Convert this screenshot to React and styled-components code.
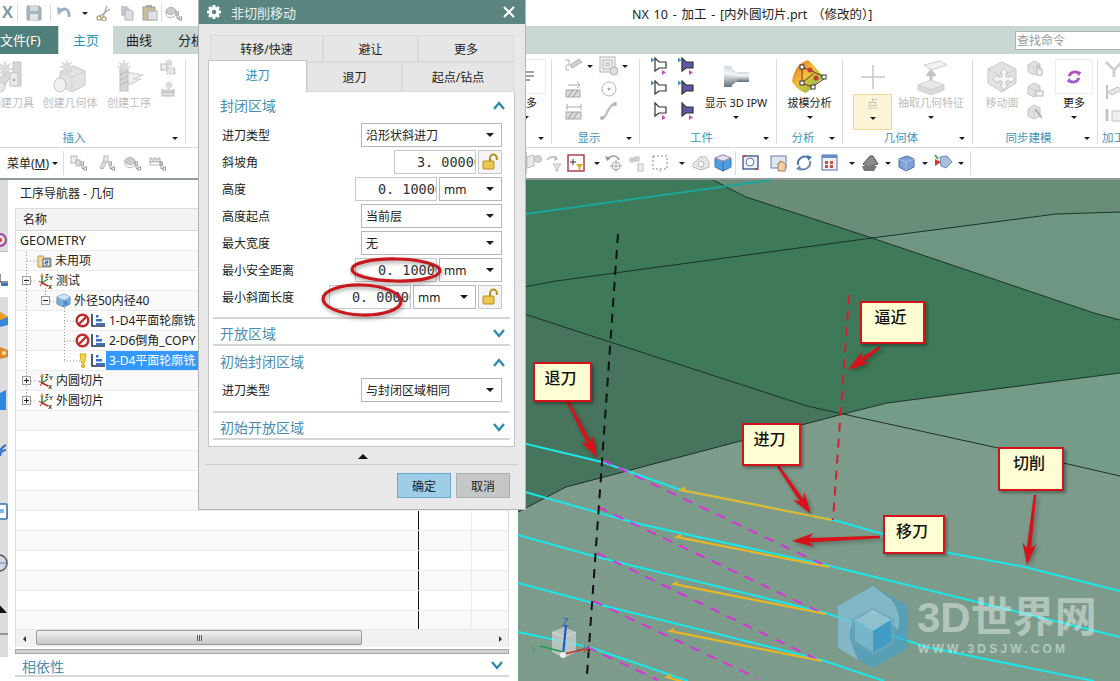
import React from 'react';
import styled, { createGlobalStyle } from 'styled-components';

const CJK = '"Noto Sans", "Noto Sans CJK SC", sans-serif';
const Global = createGlobalStyle`
  html, body { margin: 0; padding: 0; background: #fff; }
  * { box-sizing: border-box; }
  body { font-family: ${CJK}; font-size: 12px; color: #222; }
`;

const Page = styled.div`position: relative; width: 1120px; height: 681px; overflow: hidden; background: #fff; display: flex; flex-direction: column;`;

/* ---------- generic bits ---------- */
const Caret = styled.span`
  display: inline-block; width: 0; height: 0; flex: none;
  border-left: ${p => p.$s || 4}px solid transparent; border-right: ${p => p.$s || 4}px solid transparent;
  border-top: ${p => p.$s || 4}px solid #1c1c1c;
`;
const Svg = ({ s = 18, w, h, vb, children }) => (
  <svg width={w || s} height={h || s} viewBox={vb || `0 0 ${w || s} ${h || s}`} style={{ flex: 'none', display: 'block' }}>{children}</svg>
);

const Burst = ({ x, y, r = 8 }) => {
  const pts = [];
  for (let i = 0; i < 16; i++) {
    const a = (i * Math.PI) / 8;
    const rr = i % 2 ? r * 0.42 : r;
    pts.push(`${(x + Math.cos(a) * rr).toFixed(1)},${(y + Math.sin(a) * rr).toFixed(1)}`);
  }
  return <polygon points={pts.join(' ')} fill="#dcdcdc" stroke="#c8c8c8" strokeWidth=".5" />;
};

const CutterIcon = () => (
  <Svg w={36} h={34}>
    <path d="M2 24 L12 10 L18 14 L8 30 Z" fill="#dadada" stroke="#c4c4c4" />
    <circle cx="6" cy="27" r="5" fill="#e6e6e6" stroke="#c4c4c4" />
    <rect x="19" y="2" width="8" height="24" fill="#d6d6d6" stroke="#c4c4c4" />
    <path d="M16 13 L24 13 L24 26 L16 26 Z" fill="#ebebeb" stroke="#c4c4c4" />
    <circle cx="20" cy="20" r="1.4" fill="#aaa" />
    <Burst x={11} y={9} r={8} />
  </Svg>
);
const GeomIcon = () => (
  <Svg w={36} h={34}>
    <path d="M8 12 L22 6 L33 11 L33 25 L20 32 L8 26 Z" fill="#e2e2e2" stroke="#c8c8c8" />
    <path d="M8 12 L20 17 L33 11 M20 17 L20 32" fill="none" stroke="#d0d0d0" />
    <ellipse cx="8" cy="25" rx="6" ry="7" fill="#f0f0f0" stroke="#c4c4c4" />
    <Burst x={15} y={7} r={7} />
  </Svg>
);
const OperIcon = () => (
  <Svg w={36} h={34}>
    <path d="M16 12 L32 15 L22 19 L30 19 L20 24 L16 24 Z" fill="#f0f0f0" stroke="#ccc" />
    <rect x="9" y="9" width="8" height="22" fill="#d6d6d6" stroke="#c0c0c0" />
    <path d="M9 15 L17 11 M9 20 L17 16 M9 25 L17 21" stroke="#b4b4b4" />
    <Burst x={13} y={7} r={7} />
  </Svg>
);
const BurstSmall = ({ variant }) => (
  <Svg s={18}>
    {variant ? (
      <>
        <path d="M3 12 L3 9 L6 11 L9 9 L12 11 L15 9 L15 12 Z" fill="#eee" stroke="#bbb" />
        <rect x="3" y="12" width="12" height="4" fill="#ddd" stroke="#bbb" />
      </>
    ) : (
      <>
        <rect x="2" y="6" width="6" height="6" fill="#eee" stroke="#bbb" />
        <rect x="8" y="10" width="8" height="6" fill="#e6e6e6" stroke="#bbb" strokeDasharray="2 1" />
      </>
    )}
    <Burst x={10} y={5} r={4} />
  </Svg>
);
const Nodes = ({ kind = 0 }) => (
  <Svg s={18}>
    {kind === 0 && <><rect x="1" y="2" width="6" height="7" fill="#eee" stroke="#b4b4b4" /><rect x="6" y="6" width="4" height="6" fill="#ddd" stroke="#b4b4b4" /></>}
    {kind === 1 && <><path d="M2 14 L6 5 L9 7 L5 15 Z" fill="#ddd" stroke="#b4b4b4" /><rect x="6" y="2" width="4" height="6" fill="#eee" stroke="#b4b4b4" /></>}
    {kind === 2 && <><ellipse cx="6" cy="7" rx="5" ry="3.5" fill="#ccc" stroke="#b4b4b4" /><path d="M1 7 v3 a5 3.5 0 0 0 10 0 v-3" fill="none" stroke="#b4b4b4" /></>}
    {kind === 3 && <><path d="M1 8 v-4 h2 v2 h2 v-2 h2 v2 h2 v-2 h2 v4 Z" fill="#eee" stroke="#b4b4b4" /><rect x="1" y="8" width="11" height="3" fill="#fff" stroke="#b4b4b4" /></>}
    <rect x="11" y="8" width="2.5" height="3" fill="none" stroke="#999" />
    <rect x="14" y="13" width="2.5" height="3" fill="none" stroke="#999" />
    <path d="M12 11 V14.5 H14" fill="none" stroke="#999" />
  </Svg>
);

const ToolRight = ({ fill = '#fff', tip = true, ticks = true }) => (
  <Svg s={22}>
    {ticks && <path d="M3 2.5 L6.5 5 L3 7.5 Z" fill="#4a8ac8" />}
    <path d="M7 3 L11 7 L18 7 L18 13 L11 13 L7 16 Z" fill={fill} stroke="#333" strokeWidth="1.2" />
    {tip && <path d="M14 15 L18 17.5 L14 20 Z" fill="#c44fc0" />}
  </Svg>
);

const IpwIcon = () => (
  <Svg w={26} h={22}>
    <defs>
      <linearGradient id="ipw" x1="0" y1="0" x2="0" y2="1">
        <stop offset="0" stopColor="#cfd6dc" /><stop offset=".35" stopColor="#f4f6f8" /><stop offset="1" stopColor="#5f6d78" />
      </linearGradient>
    </defs>
    <rect x="1" y="0" width="8" height="21" rx="1" fill="url(#ipw)" />
    <path d="M9 3 C12 5 12 6 14 6 L14 16 C12 16 12 17 9 19 Z" fill="url(#ipw)" />
    <rect x="14" y="6" width="12" height="10" fill="url(#ipw)" />
  </Svg>
);
const DraftIcon = () => (
  <Svg w={44} h={36}>
    <defs>
      <linearGradient id="draft" x1="0" y1="0" x2="1" y2="1">
        <stop offset="0" stopColor="#e4602a" /><stop offset=".45" stopColor="#f0c23a" /><stop offset="1" stopColor="#4cc24a" />
      </linearGradient>
    </defs>
    <path d="M4 22 C6 10 12 3 20 1 C26 6 32 14 36 18 C30 22 24 30 18 34 C12 32 7 28 4 22 Z" fill="url(#draft)" />
    <path d="M14 8 L24 12 L36 18 M14 8 L14 24 L24 28 L36 20 M14 24 L26 14" stroke="#7a2a2a" strokeWidth="1" fill="none" />
    {[[14, 8], [14, 24], [36, 18], [25, 28]].map(([x, y]) => <rect key={x + '' + y} x={x - 2} y={y - 2} width="4" height="4" fill="#fff" stroke="#333" />)}
    <circle cx="22" cy="11" r="2.5" fill="#c63a3a" />
    <circle cx="28" cy="19" r="2.5" fill="#c63a3a" />
  </Svg>
);
const PlusIcon = () => (
  <Svg s={26}>
    <path d="M13 1 V25 M1 13 H25" stroke="#c8c8c8" strokeWidth="1.5" />
  </Svg>
);
const ExtractIcon = () => (
  <Svg w={32} h={36}>
    <path d="M9 6 L25 2 L32 6 L16 11 Z" fill="#f2f2f2" stroke="#d0d0d0" />
    <path d="M16 24 V13 M12 17 L16 12 L20 17" stroke="#c4c4c4" strokeWidth="3" fill="none" />
    <path d="M3 26 L16 21 L29 26 L16 31 Z" fill="#e8e8e8" stroke="#d0d0d0" />
    <path d="M3 26 V31 L16 36 L29 31 V26 L16 31 Z" fill="#dadada" stroke="#d0d0d0" />
  </Svg>
);
const MoveFaceIcon = () => (
  <Svg w={36} h={36}>
    <path d="M4 10 L18 3 L32 10 L32 24 L18 33 L4 24 Z" fill="#e2e2e2" stroke="#c8c8c8" />
    <path d="M4 10 L18 18 L32 10 M18 18 V33" stroke="#d0d0d0" fill="none" />
    <path d="M20 9 L24 14 L22 14 L22 18 L26 18 L26 16 L31 20 L26 24 L26 22 L22 22 L22 26 L24 26 L20 31 L16 26 L18 26 L18 22 L14 22 L14 24 L9 20 L14 16 L14 18 L18 18 L18 14 L16 14 Z" fill="#f6f6f6" stroke="#c4c4c4" />
  </Svg>
);
const Hexlet = ({ mark = 0 }) => (
  <Svg s={18}>
    <path d="M2 6 L8 2 L14 5 L14 13 L8 16 L2 13 Z" fill="#e2e2e2" stroke="#c4c4c4" />
    <path d="M2 6 L8 9 L14 5 M8 9 V16" fill="none" stroke="#d0d0d0" />
    {mark === 0 && <path d="M11 7 v9 h5 v-6 h-3 v-3 Z" fill="#f2f2f2" stroke="#b4b4b4" />}
    {mark === 1 && <rect x="10" y="10" width="7" height="5" fill="#f2f2f2" stroke="#b4b4b4" />}
    {mark === 2 && <path d="M9 6 L16 15" stroke="#aaa" strokeWidth="1.5" />}
  </Svg>
);
const Refresh = () => (
  <Svg w={16} h={16} vb="0 0 20 20">
    <path d="M4 9 A7 7 0 0 1 16 6" fill="none" stroke="#b04fc0" strokeWidth="3.6" />
    <path d="M13 2 L19 4 L16 9 Z" fill="#b04fc0" />
    <path d="M16 11 A7 7 0 0 1 4 14" fill="none" stroke="#9d5fd0" strokeWidth="3.6" />
    <path d="M7 18 L1 16 L4 11 Z" fill="#9d5fd0" />
  </Svg>
);
const DisplayIcon = ({ kind }) => (
  <Svg s={20}>
    {kind === 0 && <><path d="M1 4 H5 V9 H2 V14 H5" fill="none" stroke="#b4b4b4" /><path d="M6 9 L15 3 L18 6 L8 12 Z" fill="#d0d0d0" stroke="#b4b4b4" /></>}
    {kind === 1 && <><rect x="1" y="1" width="15" height="15" fill="#f2f2f2" stroke="#b4b4b4" /><rect x="4" y="4" width="9" height="9" fill="none" stroke="#b4b4b4" /><rect x="7" y="7" width="3" height="3" fill="none" stroke="#b4b4b4" /><circle cx="15" cy="15" r="4" fill="#ddd" stroke="#b4b4b4" /></>}
    {kind === 2 && <><path d="M4 6 H16 M13 3 L16 6 L13 9" fill="none" stroke="#aaa" /><rect x="2" y="11" width="14" height="7" fill="#dadada" stroke="#aaa" /><path d="M4 18 L9 11 M9 18 L14 11" stroke="#999" /></>}
    {kind === 3 && <><circle cx="10" cy="10" r="7" fill="none" stroke="#b4b4b4" /><circle cx="10" cy="10" r="1.5" fill="#aaa" /></>}
    {kind === 4 && <><path d="M3 6 H17 M3 3 V9 M17 3 V9" fill="none" stroke="#aaa" /><rect x="2" y="11" width="15" height="7" fill="#dadada" stroke="#aaa" /><path d="M4 18 L9 11 M9 18 L14 11" stroke="#999" /></>}
    {kind === 5 && <><path d="M3 17 C9 17 7 5 16 3" fill="none" stroke="#c0c0c0" strokeWidth="2.4" /><circle cx="3" cy="17" r="2" fill="#b4b4b4" /><circle cx="16" cy="3" r="2" fill="#b4b4b4" /></>}
  </Svg>
);
const CamIcon = ({ k }) => (
  <Svg s={20}>
    {k === 0 && <path d="M2 3 L10 11 L18 3 M10 11 V18" fill="none" stroke="#d0d0d0" strokeWidth="3" />}
    {k === 1 && <><path d="M3 3 V17" stroke="#c4c4c4" strokeWidth="2" /><path d="M3 10 L14 5 L18 8 L8 13 Z" fill="#e4e4e4" stroke="#c4c4c4" /></>}
    {k === 2 && <><path d="M3 4 V16" stroke="#c4c4c4" strokeWidth="3" /><rect x="8" y="6" width="10" height="10" fill="#eee" stroke="#c4c4c4" /></>}
  </Svg>
);

/* right hand toolbar */
const BarIcon = ({ k }) => (
  <Svg s={20}>
    {k === 'filter' && <><path d="M2 4 L9 2 L9 13 L2 15 Z" fill="#e8e8e8" stroke="#bbb" /><circle cx="13" cy="6" r="3.5" fill="#d4d4d4" stroke="#bbb" /></>}
    {k === 'swap' && <><path d="M3 7 C6 3 11 3 13 6 M11 3 L13 6 L10 7" fill="none" stroke="#bbb" strokeWidth="1.6" /><path d="M9 11 H17 L14 15 V18 H12 V15 Z" fill="#e6e6e6" stroke="#bbb" /></>}
    {k === 'select' && <><rect x="1" y="2" width="16" height="16" fill="#fff" stroke="#a5353b" strokeWidth="1.4" /><path d="M6 6 V12 M3 9 H9" stroke="#333" /><path d="M9 11 H16 L13.5 14 V17 H11.5 V14 Z" fill="#e8a820" /></>}
    {k === 'undo' && <><path d="M3 6 C8 1 14 3 15 7" fill="none" stroke="#999" strokeWidth="1.5" /><path d="M1 3 L3 8 L7 5 Z" fill="#999" /><circle cx="12" cy="13" r="4" fill="none" stroke="#aaa" /><path d="M12 7 V19 M6 13 H18" stroke="#aaa" /></>}
    {k === 'multi' && <><circle cx="6" cy="7" r="3" fill="#d0d0d0" /><rect x="9" y="4" width="4" height="4" fill="#ddd" stroke="#bbb" /><rect x="12" y="11" width="5" height="7" fill="#eee" stroke="#bbb" /></>}
    {k === 'dash' && <><rect x="2" y="3" width="14" height="13" fill="none" stroke="#888" strokeDasharray="2 2" /><path d="M9 16 V19" stroke="#aaa" /></>}
    {k === 'wire' && <><path d="M2 11 L9 4 H15 L18 9 V14 L10 17 L2 14 Z" fill="#e8e8e8" stroke="#bbb" /><circle cx="10" cy="11" r="3" fill="#f6f6f6" stroke="#bbb" /></>}
    {k === 'cube' && <><path d="M2 5 L10 2 L18 5 L18 14 L10 18 L2 14 Z" fill="#4c9fe0" stroke="#3a78b8" /><path d="M2 5 L10 8 L18 5 L10 2 Z" fill="#d6ecfa" stroke="#d08090" /><path d="M10 8 V18" stroke="#2f6fa8" /></>}
    {k === 'zoom' && <><rect x="2" y="3" width="15" height="13" fill="#eef2f8" stroke="#35508c" strokeWidth="1.3" /><circle cx="9" cy="9" r="4" fill="#fff" stroke="#5577aa" /><path d="M2 3 h3 M17 16 h-3" stroke="#c43" strokeWidth="2" /></>}
    {k === 'pan' && <><rect x="2" y="3" width="15" height="12" fill="#dfe6f2" stroke="#6b7fa4" /><path d="M9 18 L9 10 L11 10 L11 8 L14 9 L17 12 L16 18 Z" fill="#f0cfa8" stroke="#a87f50" /></>}
    {k === 'rotate' && <><path d="M4 12 A7 7 0 0 1 15 5" fill="none" stroke="#4a76a8" strokeWidth="2" /><path d="M13 2 L18 4 L14 8 Z" fill="#4a76a8" /><path d="M16 8 A7 7 0 0 1 5 15" fill="none" stroke="#6a8ab0" strokeWidth="2" /><path d="M7 18 L2 16 L6 12 Z" fill="#6a8ab0" /></>}
    {k === 'grid' && <><rect x="2" y="2" width="15" height="15" fill="#eef2f8" stroke="#5070a8" /><rect x="2" y="2" width="15" height="3" fill="#6a8cc4" /><path d="M5 8 h3 v3 h-3 Z M10 8 h3 v3 h-3 Z M5 12 h3 v3 h-3 Z M10 12 h3 v3 h-3 Z" fill="#c85040" /></>}
    {k === 'shade' && <><path d="M3 11 L10 3 L13 3 L18 11 L8 14 Z" fill="#8a8a8a" stroke="#555" /><path d="M2 13 L17 13 L14 18 L4 18 Z" fill="#777" /></>}
    {k === 'box' && <><path d="M3 6 L11 3 L18 6 L18 14 L10 18 L3 14 Z" fill="#7fa3d8" stroke="#4a6aa0" /><path d="M3 6 L10 9 L18 6 M10 9 V18" fill="none" stroke="#a8c2e8" /></>}
    {k === 'cs' && <><path d="M7 4 L14 3 L19 9 L13 15 L8 13 Z" fill="#a8c0e0" stroke="#6a88b0" /><path d="M2 6 L8 9 L2 13 Z" fill="#c83a3a" /><path d="M2 2 L5 6" stroke="#3ab040" strokeWidth="2" /></>}
  </Svg>
);

/* ---------- title bar ---------- */
const TitleBar = styled.div`height: 26px; flex: none; display: flex; align-items: center; background: #fff; position: relative;`;
const QuickBar = styled.div`display: flex; align-items: center; width: 632px; height: 100%; gap: 0;`;
const QuickSlot = styled.span`display: flex; justify-content: center; align-items: center; width: ${p => p.$w}px; flex: none;`;
const QuickSep = styled.span`width: 1px; height: 18px; background: #dcdcdc; flex: none;`;
const WindowTitle = styled.div`font-size: 12.5px; color: #222; white-space: nowrap; word-spacing: 1.5px;`;
const NxMark = styled.span`font: bold 17px "Liberation Sans", sans-serif; color: #7d99a6; margin-left: -2px;`;
const SaveIcon = () => (
  <Svg s={16}><path d="M1 1 H13 L15 3 V15 H1 Z" fill="#a9b3c0" stroke="#9aa" /><rect x="4" y="1" width="8" height="5" fill="#d4d9e0" /><rect x="4" y="9" width="8" height="6" fill="#e0e3e8" /></Svg>
);
const UndoIcon = () => (
  <Svg s={16}><path d="M4 6 C8 2 14 4 13 12" fill="none" stroke="#9ab0c4" strokeWidth="3" /><path d="M1 2 L8 5 L2 10 Z" fill="#9ab0c4" /></Svg>
);
const CutIcon = () => (
  <Svg s={16}><circle cx="3" cy="13" r="2" fill="none" stroke="#b8a37a" strokeWidth="1.4" /><circle cx="8" cy="14" r="2" fill="none" stroke="#b8a37a" strokeWidth="1.4" /><path d="M4 11 L14 4 M7 12 L11 1" stroke="#aaa" strokeWidth="1.4" /></Svg>
);
const CopyIcon = () => (
  <Svg s={16}><path d="M2 1 H8 L10 3 V11 H2 Z" fill="#c5cbd2" /><path d="M6 5 H12 L14 7 V15 H6 Z" fill="#dce0e5" stroke="#b0b5bb" /></Svg>
);
const PasteIcon = () => (
  <Svg s={16}><rect x="1" y="2" width="12" height="13" fill="#c9bc9a" stroke="#aaa18a" /><rect x="4" y="0" width="6" height="3" fill="#aaa" /><rect x="6" y="6" width="9" height="9" fill="#dfe3e8" stroke="#aaa" /></Svg>
);

/* ---------- tabs ---------- */
const TabBar = styled.div`height: 28px; flex: none; background: #c8d7d4; display: flex; align-items: stretch; position: relative;`;
const FileTab = styled.div`width: 58px; background: #4e7f7a; color: #fff; font-size: 13px; line-height: 28px; white-space: nowrap;`;
const RibbonTab = styled.div`
  width: ${p => p.$w}px; flex: none; text-align: center; font-size: 13px; line-height: 28px;
  color: ${p => (p.$on ? '#2f8fb5' : '#222')}; background: ${p => (p.$on ? '#fff' : 'transparent')};
  margin-left: ${p => p.$ml || 0}px;
`;
const SearchBox = styled.div`
  margin-left: auto; width: 105px; height: 19px; align-self: center; border: 1px solid #aab5b3; border-right: 0;
  background: #fff; color: #9a9a9a; font-size: 12px; line-height: 17px; padding-left: 1px;
`;

/* ---------- ribbon ---------- */
const Ribbon = styled.div`height: 94px; flex: none; display: flex; padding-top: 5px; background: #fff; border-bottom: 1px solid #d8d8d8; overflow: hidden;`;
const Group = styled.div`
  width: ${p => p.$w}px; flex: none; height: 85px; display: flex; flex-direction: column; margin-left: ${p => p.$ml || 0}px;
  border-right: ${p => (p.$last ? 'none' : '1px solid #dcdcdc')};
`;
const GroupBody = styled.div`height: 73px; display: flex; justify-content: ${p => p.$end ? 'flex-end' : 'flex-start'}; padding-left: ${p => p.$pad || 0}px; padding-right: ${p => p.$padR || 0}px;`;
const GroupFoot = styled.div`height: 12px; display: flex; align-items: center; font-size: 11.5px; line-height: 12px; color: #3f93b8;`;
const GroupName = styled.span`flex: 1; text-align: ${p => p.$left ? 'left' : 'center'}; padding-left: ${p => p.$left ? 4 : 0}px; white-space: nowrap;`;
const FootCaret = styled(Caret)`margin: 0 7px 0 0;`;
const Large = styled.div`width: ${p => p.$w}px; flex: none; display: flex; flex-direction: column; align-items: center; margin-left: ${p => p.$ml || 0}px;`;
const LargeIcon = styled.div`
  height: 35px; width: 100%; display: flex; align-items: center; justify-content: center;
  ${p => p.$boxed ? 'border: 1px solid #ececec;' : ''}
`;
const LabelBlock = styled.div`
  width: 100%; flex: 1; display: flex; flex-direction: column; align-items: center; max-height: 36px;
  ${p => p.$active ? 'background: #fdf4d8; border: 1px solid #efd997;' : ''}
`;
const LargeLabel = styled.span`
  font-size: 11px; line-height: 17px; white-space: nowrap; color: ${p => (p.$dim ? '#bdbdbd' : '#222')};
`;
const CaretRow = styled.div`height: 12px; display: flex; align-items: center; justify-content: center;`;
const SmallCol = styled.div`width: ${p => p.$w}px; flex: none; display: flex; flex-direction: column; margin-left: ${p => p.$ml || 0}px; align-items: center; margin-top: ${p => p.$top || 0}px; gap: ${p => p.$gap || 4}px;`;
const SmallGrid = styled.div`
  display: grid; grid-template-columns: ${p => p.$cols}; grid-auto-rows: 22.5px; align-items: center; justify-items: center;
  margin-left: ${p => p.$ml || 0}px; margin-top: -4px; flex: none;
`;

const Big = ({ icon, label, w, ml, caret = true, dim, active, boxed }) => (
  <Large $w={w} $ml={ml}>
    <LargeIcon $boxed={boxed}>{icon}</LargeIcon>
    <LabelBlock $active={active}>
      <LargeLabel $dim={dim}>{label}</LargeLabel>
      {caret && <CaretRow><Caret $s={3.5} /></CaretRow>}
    </LabelBlock>
  </Large>
);
const Foot = ({ name, caret = true, left }) => (
  <GroupFoot><GroupName $left={left}>{name}</GroupName>{caret && <FootCaret $s={3.5} />}</GroupFoot>
);

/* ---------- toolbar ---------- */
const ToolBar = styled.div`height: 32px; flex: none; display: flex; align-items: center; background: #fff; border-bottom: 2px solid #8f9a98; overflow: hidden;`;
const MenuButton = styled.div`display: flex; align-items: center; gap: 3px; font-size: 12px; padding-left: 7px; width: 63px; flex: none; white-space: nowrap;`;
const ToolSlot = styled.span`display: flex; justify-content: center; align-items: center; width: ${p => p.$w}px; flex: none;`;
const ToolSep = styled.span`width: 1px; height: 24px; background: #dcdcdc; flex: none;`;
const ComboStub = styled.span`width: 15px; height: 22px; flex: none; border: 1px solid #c8c8c8; border-left: 0; display: flex; align-items: center; justify-content: flex-end; padding-right: 2px;`;

/* ---------- workspace ---------- */
const Workspace = styled.div`flex: 1; display: flex; min-height: 0;`;
const Rail = styled.div`width: 8px; flex: none; display: flex; flex-direction: column;`;
const RailPart = styled.div`
  height: ${p => p.$h}px; flex: none; overflow: hidden; position: relative;
  background: ${p => (p.$grey ? '#dcdcdc' : '#fff')};
  border-bottom: ${p => (p.$line ? '1px solid #bdbdbd' : 'none')};
`;
const RailGlyph = styled.div`position: absolute; right: 0; top: ${p => p.$t}px;`;
const Nav = styled.div`width: 510px; flex: none; padding-left: 7px; padding-right: 9px; display: flex; flex-direction: column;`;
const NavTitle = styled.div`height: 28px; flex: none; line-height: 28px; padding-left: 5px; font-size: 12px; color: #222;`;
const Table = styled.div`flex: none; border-left: 1px solid #dcdcdc; border-right: 1px solid #dcdcdc; position: relative; display: flex; flex-direction: column;`;
const TableHead = styled.div`height: 23px; background: #f3f3f3; border-top: 1px solid #dcdcdc; border-bottom: 1px solid #d4d4d4; line-height: 21px; padding-left: 7px; font-size: 12px;`;
const RowsArea = styled.div`height: 398px; overflow: hidden; position: relative;`;
const Row = styled.div`
  height: 20px; display: grid; grid-template-columns: 403px 53px 1fr;
  background: ${p => (p.$odd ? '#f9f9f9' : '#fff')}; border-bottom: 1px solid #ebebeb;
`;
const MainCell = styled.div`
  display: flex; align-items: center; padding-left: ${p => p.$pad || 0}px; overflow: hidden; border-right: 1px solid #111;
  font-size: ${p => p.$big ? '12.5px' : '12px'}; white-space: nowrap;
`;
const Cell = styled.div`border-right: 1px solid #ebebeb;`;
const Expander = styled.span`
  width: 9px; height: 9px; flex: none; margin-right: 6px; border: 1px solid #9a9a9a; background: #f6f6f6;
  position: relative;
  &::before { content: ''; position: absolute; left: 1px; top: 3px; width: 5px; height: 1px; background: #222; }
  ${p => p.$closed ? `&::after { content: ''; position: absolute; left: 3px; top: 1px; width: 1px; height: 5px; background: #222; }` : ''}
`;
const NodeLabel = styled.span`
  padding: 0 3px; line-height: 19px; height: 19px; flex: 1;
  color: ${p => (p.$sel ? '#fff' : '#222')}; background: ${p => (p.$sel ? '#3399ff' : 'transparent')};
`;
const TreeLines = styled.svg`position: absolute; left: 0; top: 0; pointer-events: none;`;
const Scrollbar = styled.div`height: 18px; flex: none; background: #f1f1f1; border-top: 1px solid #e6e6e6; display: flex; align-items: center; position: relative; padding: 0 6px;`;
const Thumb = styled.div`
  position: absolute; left: 20px; width: 326px; height: 15px; top: 0; border: 1px solid #9a9a9a; border-radius: 2px;
  background: linear-gradient(#f2f2f2, #dcdcdc 50%, #c6c6c6); display: flex; align-items: center; justify-content: center; gap: 1px;
  span { width: 1px; height: 6px; background: #555; }
`;
const ArrowL = styled.span`width: 0; height: 0; border: 3.5px solid transparent; border-right-color: #333; margin-left: -2px;`;
const ArrowR = styled.span`width: 0; height: 0; border: 3.5px solid transparent; border-left-color: #333; margin-left: auto; margin-right: -3px;`;
const Band = styled.div`height: 5px; flex: none; margin-top: 2px; background: #cfcfcf; border: 1px solid #a8a8a8;`;
const DepHeader = styled.div`
  height: 23px; flex: none; display: flex; align-items: center; justify-content: space-between; padding: 2px 6px 0 7px;
  font-size: 14px; color: #4a8db0; border-bottom: 2px solid #d8d8d8;
`;

const Chevron = ({ up }) => (
  <Svg w={12} h={9}><path d={up ? 'M1 8 L6 2 L11 8' : 'M1 1 L6 7 L11 1'} fill="none" stroke="#2f8cac" strokeWidth="2.4" /></Svg>
);

const Folder = () => (
  <Svg s={15}><path d="M1 3 H6 L7 5 H14 V14 H1 Z" fill="#f2dc9a" stroke="#b59a50" /><rect x="6" y="6" width="7" height="7" fill="#fff" stroke="#3a5a9a" /><path d="M8 8 h3 v1.5 h-3 v1.5 h3" fill="none" stroke="#3a5a9a" /></Svg>
);
const Triad = () => (
  <Svg w={16} h={16}>
    <path d="M5 10 V3" stroke="#2f7f3a" strokeWidth="1.5" /><path d="M3 4 L5 0 L7 4 Z" fill="#e08a2a" />
    <path d="M5 10 L11 6" stroke="#3a8a3a" strokeWidth="1.5" />
    <path d="M5 10 L11 13" stroke="#c02020" strokeWidth="1.5" />
    <path d="M2 8 L5 10 L3 13" stroke="#c02020" fill="none" />
    <text x="8" y="5" fontSize="6" fontFamily="Liberation Sans" fontWeight="bold" fill="#222">Z</text>
    <text x="12" y="7" fontSize="6" fontFamily="Liberation Sans" fontWeight="bold" fill="#222">Y</text>
    <text x="11" y="16" fontSize="6" fontFamily="Liberation Sans" fontWeight="bold" fill="#222">X</text>
  </Svg>
);
const BlueCube = () => (
  <Svg s={15}><path d="M1 4 L8 1 L14 4 L14 11 L8 14 L1 11 Z" fill="#7fb0dc" stroke="#5f8fbc" /><path d="M1 4 L8 7 L14 4 L8 1 Z" fill="#cfe3f4" /><path d="M8 7 V14" stroke="#4f7fa8" /><circle cx="10" cy="10" r="2" fill="#4f88c0" /></Svg>
);
const Ban = () => (
  <Svg s={15}><circle cx="7.5" cy="7.5" r="5.8" fill="#fff" stroke="#c22a2a" strokeWidth="2.4" /><path d="M3.5 11.5 L11.5 3.5" stroke="#c22a2a" strokeWidth="2.4" /></Svg>
);
const OpGlyph = () => (
  <Svg w={16} h={15}><path d="M2 1 V13 H15" fill="none" stroke="#22335a" strokeWidth="1.6" /><rect x="6" y="2" width="2.5" height="2.5" fill="#3b6fc4" /><rect x="6" y="6" width="6" height="2.5" fill="#3b6fc4" /><rect x="6" y="10" width="9" height="2" fill="#3b6fc4" /></Svg>
);
const Bulb = () => (
  <Svg s={15}><path d="M5 1 H11 L9.5 10 H6.5 Z" fill="#f6d840" stroke="#c8a818" /><circle cx="8" cy="13" r="1.6" fill="#e8c428" stroke="#c8a818" /></Svg>
);

/* ---------- scene ---------- */
const Scene = styled.div`flex: 1; position: relative; overflow: hidden; background: #7d9b8b;`;
const SceneSvg = styled.svg`position: absolute; left: 0; top: 0; display: block;`;
const Callout = styled.div`
  position: absolute; left: ${p => p.$x - 518}px; top: ${p => p.$y - 180}px; width: ${p => p.$w}px; height: ${p => p.$h}px;
  background: #fffed2; border: 2px solid #d2141a; box-shadow: 2px 2px 3px rgba(0,0,0,.35);
  font-size: 16px; font-weight: 500; color: #111; display: flex; justify-content: center; padding-top: 3px; line-height: 22px; padding-right: 4px;
`;
const WaterMain = styled.div`
  position: absolute; left: ${917 - 518}px; top: ${594 - 180}px; font: bold 42px/48px "Liberation Sans", "Noto Sans CJK SC", sans-serif;
  color: rgba(232, 240, 236, .5); white-space: nowrap;
`;
const WaterSub = styled.div`
  position: absolute; left: ${918 - 518}px; top: ${642 - 180}px; font: bold 12px/15px "Liberation Sans", sans-serif; letter-spacing: 3.2px;
  color: rgba(232, 240, 236, .55); white-space: nowrap;
`;

function arrow([x1, y1], [x2, y2]) {
  const dx = x2 - x1, dy = y2 - y1, L = Math.hypot(dx, dy), ux = dx / L, uy = dy / L, nx = -uy, ny = ux;
  const p = (along, off) => `${(x1 + ux * along + nx * off).toFixed(1)},${(y1 + uy * along + ny * off).toFixed(1)}`;
  const H = 22;
  return [p(0, -1.2), p(L - H + 5, -2.2), p(L - H, -7), p(L, 0), p(L - H, 7), p(L - H + 5, 2.2), p(0, 1.2)].join(' ');
}
const ARROWS = [
  [[567, 400], [597, 458]],
  [[778, 466], [811, 514]],
  [[880, 347], [848, 370]],
  [[880, 537], [792, 541]],
  [[1035, 495], [1027, 565]],
];
const CYAN = [
  'M518 442 L602 462 L681 490 L834 520 L949 553 L1025 567 L1120 591',
  'M518 490 L635 523 L826 565 L1120 637',
  'M518 535 L597 557 L826 613 L926 647 L1094 681',
  'M518 583 L593 603 L822 660 L884 681',
  'M518 632 L589 647 L688 681',
];
const MAGENTA = [
  [602, 460, 830, 568], [598, 507, 826, 615], [597, 553, 822, 662], [593, 601, 757, 678], [587, 647, 658, 680],
];
const ORANGE = [
  [681, 490, 832, 520], [677, 537, 829, 567], [674, 584, 826, 614], [670, 631, 822, 661], [667, 677, 690, 684],
];

const SceneArt = () => (
  <SceneSvg width="602" height="501" viewBox="518 180 602 501">
    <polygon points="518,180 713,180 746,197 872,238 1094,313 1120,320 1120,373 887,403 843,414 566,487 518,512" fill="#3e7a5a" />
    <polygon points="518,311 807,406 843,414 566,487 518,512" fill="#47745c" />
    <polygon points="713,180 1120,180 1120,212 1056,214 872,238 746,197" fill="#6a8d7a" />
    <polygon points="872,238 1056,214 1120,212 1120,320 1094,313" fill="#6f9682" />
    <polygon points="843,414 887,403 1120,373 1120,476 998,448" fill="#749c88" />
    <g fill="none" stroke="#1d3328" strokeWidth="1">
      <path d="M713 180 L746 197 L872 238 L1094 313 L1120 320" />
      <path d="M518 288 L556 281 L872 238 L1056 214 L1120 212" />
      <path d="M518 312 L807 406 L843 414 L998 448 L1120 476" />
      <path d="M518 512 L566 487 L843 414 L887 403 L1120 373" />
    </g>
    <path d="M518 215 L772 180" stroke="#1aa79b" strokeWidth="2" fill="none" />
    <g fill="none" stroke="#1be7e8" strokeWidth="2">{CYAN.map(d => <path key={d} d={d} />)}</g>
    <g stroke="#d832d8" strokeWidth="2" strokeDasharray="10 8">{MAGENTA.map(m => <line key={m[0]} x1={m[0]} y1={m[1]} x2={m[2]} y2={m[3]} />)}</g>
    <g stroke="#e8b526" strokeWidth="2.2" fill="none">{ORANGE.map(o => <path key={o[0]} d={`M${o[0] + 4} ${o[1] - 2} L${o[0]} ${o[1]} L${o[2]} ${o[3]}`} />)}</g>
    <line x1="618" y1="234" x2="587" y2="675" stroke="#111" strokeWidth="2" strokeDasharray="9 7" />
    <line x1="849" y1="295" x2="833" y2="520" stroke="#d42030" strokeWidth="2" strokeDasharray="9 7" />
    <g style={{ filter: 'drop-shadow(2px 2px 2px rgba(0,0,0,.3))' }} fill="#d8121a">
      {ARROWS.map((a, i) => <polygon key={i} points={arrow(a[0], a[1])} />)}
    </g>
    {/* axis triad */}
    <path d="M552 632 L564 627 L576 632 L576 652 L564 658 L552 652 Z" fill="#c8d2cc" opacity=".75" />
    <path d="M552 632 L564 637 L576 632 M564 637 V658" stroke="#dfe6e2" fill="none" opacity=".8" />
    <path d="M563 655 L566 625" stroke="#1f55d8" strokeWidth="2.2" />
    <path d="M563 652 L540 646" stroke="#1f9a4a" strokeWidth="1.5" />
    <path d="M564 654 L585 649" stroke="#c83030" strokeWidth="1.5" />
    <circle cx="563" cy="655" r="3" fill="#f0f0f0" />
    <text x="562" y="626" fontSize="11" fill="#2f60d0" fontFamily="Liberation Sans">Z</text>
    <text x="530" y="653" fontSize="11" fill="#4aa070" fontFamily="Liberation Sans">Y</text>
    <text x="583" y="653" fontSize="11" fill="#b03838" fontFamily="Liberation Sans">X</text>
    {/* watermark logo */}
    <g>
      <polygon points="873,586 908,606 908,648 873,668 838,648 838,606" fill="#3fa2cf" opacity=".62" />
      <path d="M838 606 L873 586 L892 600 C900 612 900 622 898 630 L884 616 C870 610 855 614 850 630 C848 642 856 652 858 660 L838 648 Z" fill="#a6cbd4" opacity=".55" />
      <polygon points="873,609 893,620 893,643 873,654 853,643 853,620" fill="none" stroke="#6fa8b8" strokeWidth="3" opacity=".6" />
      <polygon points="873,610 891,620 873,631 855,620" fill="#9cc8d4" opacity=".8" />
      <polygon points="855,620 873,631 873,652 855,641" fill="#7fbcd0" opacity=".8" />
      <polygon points="891,620 873,631 873,652 891,641" fill="#3c9ac6" opacity=".8" />
    </g>
  </SceneSvg>
);

/* ---------- dialog ---------- */
const Dialog = styled.div`
  position: absolute; left: 198px; top: 0; width: 328px; height: 510px; background: #e8e8e8;
  border: 1px solid #b4b4b4; border-top: 0; display: flex; flex-direction: column; padding: 0 10px 0 9px;
`;
const DialogHead = styled.div`
  height: 24px; flex: none; margin: 0 -10px 0 -9px; background: #5b8580; display: flex; align-items: center; padding: 0 9px 0 8px; gap: 10px;
  color: #e8f0ee; font-size: 13px;
`;
const CloseX = styled.span`margin-left: auto; display: flex;`;
const TabsTop = styled.div`display: grid; grid-template-columns: 113px 95px 96px; margin: 11px 1px 0 2px; height: 27px; flex: none;`;
const TabsBottom = styled.div`display: grid; grid-template-columns: 99px 95px 112px; height: 29px; flex: none; position: relative; z-index: 1;`;
const DTab = styled.div`
  display: flex; align-items: center; justify-content: center; font-size: 12px;
  background: ${p => (p.$on ? '#fff' : '#e6e6e6')}; color: ${p => (p.$on ? '#2f8fb5' : '#222')};
  border: 1px solid ${p => (p.$on ? '#c4c4c4' : '#dadada')}; border-bottom: ${p => (p.$on ? '0' : '1px solid #dadada')};
  ${p => p.$on ? 'margin-top: -2px; height: 32px; align-self: start; padding-bottom: 4px;' : ''}
`;
const Panel = styled.div`height: 356px; flex: none; background: #fff; border: 1px solid #c4c4c4; padding: 0 4px; display: flex; flex-direction: column;`;
const Section = styled.div`border-bottom: 2px solid #d6d6d6; padding-bottom: ${p => p.$pb || 0}px; flex: none;`;
const SectionHead = styled.div`
  height: ${p => p.$h}px; display: flex; justify-content: space-between; align-items: ${p => p.$top ? 'flex-start' : 'center'};
  padding: ${p => p.$pt || 0}px 5px 0 7px; font-size: 14px; line-height: 20px; color: #4a8db0;
  svg { margin-top: ${p => p.$top ? '5px' : '0'}; }
`;
const FormRows = styled.div`display: flex; flex-direction: column; gap: 3px; padding: 0 8px 0 9px;`;
const FormRow = styled.div`height: 24px; display: flex; align-items: center; justify-content: flex-end; gap: 2px;`;
const FormLabel = styled.span`margin-right: auto; font-size: 12px; color: #222; white-space: nowrap;`;
const Select = styled.div`
  width: ${p => p.$w}px; height: 100%; flex: none; border: 1px solid #b6b6b6; background: #fff; font-size: 12px;
  display: flex; align-items: center; justify-content: space-between; padding: 0 7px 0 4px; white-space: nowrap;
`;
const NumBox = styled.div`
  width: 82px; height: 100%; flex: none; border: 1px solid #c8c8c8; background: #fff; overflow: hidden;
  display: flex; align-items: center; justify-content: flex-end;
`;
const NumText = styled.span`font: 13.5px "DejaVu Sans Mono", monospace; color: #333; white-space: pre; margin-right: -7px;`;
const LockBtn = styled.div`width: 24px; height: 100%; flex: none; border: 1px solid #c8c8c8; background: #f4f4f4; display: flex; align-items: center; justify-content: center;`;
const Collapse = styled.div`height: 18px; flex: none; border-bottom: 1px solid #d0d0d0; margin: 0 -3px; display: flex; align-items: flex-end; justify-content: center; padding: 0 0 3px 0;`;
const UpTri = styled.span`width: 0; height: 0; border: 5px solid transparent; border-bottom-color: #111; border-top: 0; margin-left: 2px; margin-bottom: 2px;`;
const Buttons = styled.div`display: flex; justify-content: flex-end; gap: 5px; padding: 8px 5px 0 0;`;
const DlgButton = styled.div`
  width: 54px; height: 25px; font-size: 12px; display: flex; align-items: center; justify-content: center; color: #222;
  background: ${p => (p.$primary ? '#9ecde8' : '#c4c6c8')}; border: 1px solid ${p => (p.$primary ? '#65a9d0' : '#adb0b2')};
`;
const Ellipses = styled.svg`position: absolute; left: 0; top: 0; pointer-events: none;`;

const Lock = () => (
  <Svg s={18}>
    <path d="M9 8 V5 A3.4 3.4 0 0 1 15.8 5 V7" fill="none" stroke="#b48f20" strokeWidth="2" />
    <rect x="2" y="8" width="11" height="8" rx="1" fill="#edc84e" stroke="#b48f20" />
  </Svg>
);
const Gear = () => (
  <Svg s={14}>
    <g fill="#fff">
      <circle cx="7" cy="7" r="5.4" />
      {[0, 45, 90, 135].map(a => <rect key={a} x="5.6" y="0" width="2.8" height="14" transform={`rotate(${a} 7 7)`} />)}
    </g>
    <circle cx="7" cy="7" r="2.3" fill="#5b8580" />
  </Svg>
);

const SelectBox = ({ w = 141, children }) => (
  <Select $w={w}><span>{children}</span><Caret /></Select>
);

const TREE = [
  { text: 'GEOMETRY', pad: 1, big: true },
  { text: '未用项', pad: 21, icons: [<Folder key="f" />] },
  { text: '测试', pad: 6, exp: 'open', icons: [<Triad key="t" />], },
  { text: '外径50内径40', pad: 25, exp: 'open', icons: [<BlueCube key="c" />] },
  { text: '1-D4平面轮廓铣', pad: 59, icons: [<Ban key="b" />, <OpGlyph key="o" />] },
  { text: '2-D6倒角_COPY', pad: 59, icons: [<Ban key="b" />, <OpGlyph key="o" />] },
  { text: '3-D4平面轮廓铣', pad: 59, sel: true, icons: [<Bulb key="b" />, <OpGlyph key="o" />] },
  { text: '内圆切片', pad: 6, exp: 'closed', icons: [<Triad key="t" />] },
  { text: '外圆切片', pad: 6, exp: 'closed', icons: [<Triad key="t" />] },
];
const ROWS = Array.from({ length: 20 }, (_, i) => TREE[i] || null);

const RAIL = [
  { h: 52, grey: true },
  { h: 20, grey: true, line: true, glyph: <Svg w={16} h={16}><circle cx="8" cy="8" r="6" fill="none" stroke="#a040a0" strokeWidth="2" /><circle cx="8" cy="8" r="2" fill="#d04040" /></Svg>, t: 0 },
  { h: 45, glyph: <Svg w={16} h={16}><path d="M8 2 V10 H16" fill="none" stroke="#222" /><path d="M9 11 h7 v3 h-7 Z" fill="#3a78c0" /></Svg>, t: 20 },
  { h: 30, grey: true, glyph: <Svg w={16} h={16}><path d="M0 6 L8 1 L16 6 L16 14 L8 16 L0 14 Z" fill="#3a86d8" /><path d="M0 6 L8 1 L16 6 L8 9 Z" fill="#f0a020" /></Svg>, t: 14 },
  { h: 35, grey: true, glyph: <Svg w={16} h={32} vb="0 0 16 32"><path d="M8 3 L16 6 L16 13 L8 15 Z" fill="#e08830" /><circle cx="12" cy="9" r="2" fill="#f8e0a0" /><path d="M10 20 h6 v6 h-6 Z" fill="none" stroke="#777" /></Svg>, t: 17 },
  { h: 65, grey: true, glyph: <Svg w={16} h={24} vb="0 0 16 24"><path d="M14 2 V22 H2 V8 Z" fill="#2f86dc" /></Svg>, t: 26 },
  { h: 50, grey: true, glyph: <Svg w={16} h={16}><path d="M8 14 A6 6 0 0 1 14 8 M8 9 A11 11 0 0 1 14 3" fill="none" stroke="#2f6fd0" strokeWidth="2" /></Svg>, t: 15 },
  { h: 55, grey: true, glyph: <Svg w={16} h={18} vb="0 0 16 18"><rect x="3" y="2" width="12" height="15" rx="1" fill="#fff" stroke="#3570b8" strokeWidth="1.6" /><rect x="8" y="7" width="4" height="4" fill="#7fb8e8" /></Svg>, t: 25 },
  { h: 55, grey: true, glyph: <Svg w={18} h={18} vb="0 0 18 18"><circle cx="9" cy="9" r="8" fill="#cfd8e6" stroke="#555" strokeWidth="1.4" /><path d="M1 9 H17 M9 1 V17" stroke="#6a7fa8" /></Svg>, t: 22 },
  { h: 70, grey: true, glyph: <Svg w={16} h={36} vb="0 0 16 36"><path d="M7 0 L15 9 L7 9 Z" fill="#111" /><path d="M8 30 H16" stroke="#555" /></Svg>, t: 17 },
];

const TOOL_R = [
  ['stub'], ['filter', 15], ['swap', 23], ['select', 23], ['c', 17], ['undo', 18], ['multi', 25], ['dash', 25], ['c', 18],
  ['wire', 20], ['cube', 24], ['sep'], ['zoom', 30], ['pan', 26], ['rotate', 24], ['grid', 27], ['c', 17], ['shade', 19],
  ['c', 17], ['box', 20], ['c', 18], ['cs', 18], ['c', 18], ['sep'],
];

export default function App() {
  return (
    <Page>
      <Global />
      <TitleBar>
        <QuickBar>
          <QuickSlot $w={17}><NxMark>X</NxMark></QuickSlot>
          <QuickSep />
          <QuickSlot $w={32}><SaveIcon /></QuickSlot>
          <QuickSep />
          <QuickSlot $w={25}><UndoIcon /></QuickSlot>
          <QuickSlot $w={17}><Caret $s={3.5} /></QuickSlot>
          <QuickSlot $w={22}><CutIcon /></QuickSlot>
          <QuickSlot $w={23}><CopyIcon /></QuickSlot>
          <QuickSlot $w={23}><PasteIcon /></QuickSlot>
          <QuickSep />
          <QuickSlot $w={24}><Nodes kind={2} /></QuickSlot>
        </QuickBar>
        <WindowTitle>NX 10 - 加工 - [内外圆切片.prt （修改的）]</WindowTitle>
      </TitleBar>

      <TabBar>
        <FileTab>文件(F)</FileTab>
        <RibbonTab $on $w={54} $ml={1}>主页</RibbonTab>
        <RibbonTab $w={52}>曲线</RibbonTab>
        <RibbonTab $w={52}>分析</RibbonTab>
        <SearchBox>查找命令</SearchBox>
      </TabBar>

      <Ribbon>
        <Group $w={210} $ml={-24}>
          <GroupBody>
            <Big w={50} ml={11} icon={<CutterIcon />} label="创建刀具" dim caret={false} />
            <Big w={66} icon={<GeomIcon />} label="创建几何体" dim caret={false} />
            <Big w={52} icon={<OperIcon />} label="创建工序" dim caret={false} />
            <SmallCol $w={20} $ml={3} $top={-1}><BurstSmall /><BurstSmall variant /></SmallCol>
          </GroupBody>
          <Foot name="插入" />
        </Group>
        <Group $w={366}>
          <GroupBody $end $padR={5}>
            <Big w={40} boxed icon={<Svg w={20} h={18}><path d="M2 4 H18 M6 8 H18 M3 12 H14 M2 4 L8 14" stroke="#444" fill="none" /></Svg>} label="更多" />
          </GroupBody>
          <Foot name="操作" />
        </Group>
        <Group $w={88}>
          <GroupBody>
            <SmallGrid $ml={13} $cols="18px 14px 3px 18px 14px">
              <DisplayIcon kind={0} /><Caret $s={3.5} /><span /><DisplayIcon kind={1} /><Caret $s={3.5} />
              <DisplayIcon kind={2} /><span /><span /><DisplayIcon kind={3} /><span />
              <DisplayIcon kind={4} /><span /><span /><DisplayIcon kind={5} /><span />
            </SmallGrid>
          </GroupBody>
          <Foot name="显示" />
        </Group>
        <Group $w={137}>
          <GroupBody>
            <SmallGrid $ml={8} $cols="22px 5px 22px">
              <ToolRight /><span /><ToolRight fill="#5a5aa8" />
              <ToolRight tip={false} /><span /><ToolRight fill="#5a5aa8" tip={false} />
              <ToolRight ticks={false} /><span /><ToolRight fill="#5a5aa8" ticks={false} />
            </SmallGrid>
            <Big w={72} ml={3} icon={<IpwIcon />} label="显示 3D IPW" />
          </GroupBody>
          <Foot name="工件" />
        </Group>
        <Group $w={66}>
          <GroupBody><Big w={65} icon={<DraftIcon />} label="拔模分析" /></GroupBody>
          <Foot name="分析" />
        </Group>
        <Group $w={130}>
          <GroupBody>
            <Big w={39} ml={10} icon={<PlusIcon />} label="点" dim active />
            <Big w={72} ml={3} icon={<ExtractIcon />} label="抽取几何特征" dim />
          </GroupBody>
          <Foot name="几何体" />
        </Group>
        <Group $w={125}>
          <GroupBody>
            <Big w={40} ml={9} icon={<MoveFaceIcon />} label="移动面" dim caret={false} />
            <SmallCol $w={18} $ml={4} $gap={4}><Hexlet mark={0} /><Hexlet mark={1} /><Hexlet mark={2} /></SmallCol>
            <Big w={38} ml={11} boxed icon={<Refresh />} label="更多" />
          </GroupBody>
          <Foot name="同步建模" />
        </Group>
        <Group $w={30} $last>
          <GroupBody><SmallCol $w={20} $ml={6} $gap={3}><CamIcon k={0} /><CamIcon k={1} /><CamIcon k={2} /></SmallCol></GroupBody>
          <Foot name="加工" left caret={false} />
        </Group>
      </Ribbon>

      <ToolBar>
        <MenuButton>
          <span>菜单(<u>M</u>)</span><Caret $s={3.5} />
        </MenuButton>
        <ToolSep />
        <ToolSlot $w={30}><Nodes kind={0} /></ToolSlot>
        <ToolSlot $w={26}><Nodes kind={1} /></ToolSlot>
        <ToolSlot $w={26}><Nodes kind={2} /></ToolSlot>
        <ToolSlot $w={24}><Nodes kind={3} /></ToolSlot>
        <ToolSlot $w={342} />
        {TOOL_R.map(([k, w], i) => {
          if (k === 'stub') return <ComboStub key={i}><Caret $s={3} /></ComboStub>;
          if (k === 'sep') return <ToolSep key={i} />;
          if (k === 'c') return <ToolSlot key={i} $w={w}><Caret $s={3.5} /></ToolSlot>;
          return <ToolSlot key={i} $w={w}><BarIcon k={k} /></ToolSlot>;
        })}
      </ToolBar>

      <Workspace>
        <Rail>
          {RAIL.map((r, i) => (
            <RailPart key={i} $h={r.h} $grey={r.grey} $line={r.line}>
              {r.glyph && <RailGlyph $t={r.t}>{r.glyph}</RailGlyph>}
            </RailPart>
          ))}
        </Rail>
        <Nav>
          <NavTitle>工序导航器 - 几何</NavTitle>
          <Table>
            <TableHead>名称</TableHead>
            <RowsArea>
              {ROWS.map((n, i) => (
                <Row key={i} $odd={i % 2 === 1}>
                  <MainCell $pad={n ? n.pad : 0} $big={n && n.big}>
                    {n && n.exp && <Expander $closed={n.exp === 'closed'} />}
                    {n && n.icons}
                    {n && <NodeLabel $sel={n.sel}>{n.text}</NodeLabel>}
                  </MainCell>
                  <Cell />
                  <span />
                </Row>
              ))}
              <TreeLines width="200" height="200" viewBox="16 231 200 200" fill="none" stroke="#9a9a9a" strokeDasharray="1 2">
                <path d="M26.5 252 V376 M26.5 386 V396 M27 261 H37 M31 281 H37 M31 381 H37 M31 401 H37" />
                <path d="M45.5 288 V296 M50 301 H56" />
                <path d="M64.5 308 V361 M64 321 H75 M64 341 H75 M64 361 H81" />
              </TreeLines>
            </RowsArea>
            <Scrollbar>
              <ArrowL />
              <Thumb><span /><span /><span /></Thumb>
              <ArrowR />
            </Scrollbar>
          </Table>
          <Band />
          <DepHeader>相依性<Chevron /></DepHeader>
        </Nav>
        <Scene>
          <SceneArt />
          <Callout $x={860} $y={301} $w={65} $h={43}>逼近</Callout>
          <Callout $x={533} $y={362} $w={59} $h={40}>退刀</Callout>
          <Callout $x={742} $y={423} $w={59} $h={43}>进刀</Callout>
          <Callout $x={998} $y={447} $w={66} $h={44}>切削</Callout>
          <Callout $x={883} $y={515} $w={62} $h={39}>移刀</Callout>
          <WaterMain>3D世界网</WaterMain>
          <WaterSub>WWW.3DSJW.COM</WaterSub>
        </Scene>
      </Workspace>

      <Dialog>
        <DialogHead>
          <Gear />
          <span>非切削移动</span>
          <CloseX><Svg s={14}><path d="M2 2 L12 12 M12 2 L2 12" stroke="#fff" strokeWidth="2" /></Svg></CloseX>
        </DialogHead>
        <TabsTop>
          <DTab>转移/快速</DTab><DTab>避让</DTab><DTab>更多</DTab>
        </TabsTop>
        <TabsBottom>
          <DTab $on>进刀</DTab><DTab>退刀</DTab><DTab>起点/钻点</DTab>
        </TabsBottom>
        <Panel>
          <Section $pb={8}>
            <SectionHead $h={31} $top $pt={4}>封闭区域<Chevron up /></SectionHead>
            <FormRows>
              <FormRow><FormLabel>进刀类型</FormLabel><SelectBox>沿形状斜进刀</SelectBox></FormRow>
              <FormRow><FormLabel>斜坡角</FormLabel><NumBox><NumText>3. 00000</NumText></NumBox><LockBtn><Lock /></LockBtn></FormRow>
              <FormRow><FormLabel>高度</FormLabel><NumBox><NumText>0. 10000</NumText></NumBox><SelectBox w={63}>mm</SelectBox></FormRow>
              <FormRow><FormLabel>高度起点</FormLabel><SelectBox>当前层</SelectBox></FormRow>
              <FormRow><FormLabel>最大宽度</FormLabel><SelectBox>无</SelectBox></FormRow>
              <FormRow><FormLabel>最小安全距离</FormLabel><NumBox><NumText>0. 10000</NumText></NumBox><SelectBox w={63}>mm</SelectBox></FormRow>
              <FormRow><FormLabel>最小斜面长度</FormLabel><NumBox><NumText>0. 00000</NumText></NumBox><SelectBox w={63}>mm</SelectBox><LockBtn><Lock /></LockBtn></FormRow>
            </FormRows>
          </Section>
          <Section>
            <SectionHead $h={25} $pt={4}>开放区域<Chevron /></SectionHead>
          </Section>
          <Section $pb={9}>
            <SectionHead $h={32}>初始封闭区域<Chevron up /></SectionHead>
            <FormRows>
              <FormRow><FormLabel>进刀类型</FormLabel><SelectBox>与封闭区域相同</SelectBox></FormRow>
            </FormRows>
          </Section>
          <Section>
            <SectionHead $h={25} $pt={4}>初始开放区域<Chevron /></SectionHead>
          </Section>
        </Panel>
        <Collapse><UpTri /></Collapse>
        <Buttons>
          <DlgButton $primary>确定</DlgButton>
          <DlgButton>取消</DlgButton>
        </Buttons>
        <Ellipses width="328" height="510" viewBox="198 0 328 510">
          <g fill="none" stroke="#c8181e" strokeWidth="3.2" style={{ filter: 'drop-shadow(1px 2px 2px rgba(0,0,0,.4))' }}>
            <ellipse cx="395" cy="270" rx="44" ry="11" transform="rotate(1 395 270)" />
            <ellipse cx="361" cy="300" rx="39" ry="15" transform="rotate(2 361 300)" />
          </g>
        </Ellipses>
      </Dialog>
    </Page>
  );
}
